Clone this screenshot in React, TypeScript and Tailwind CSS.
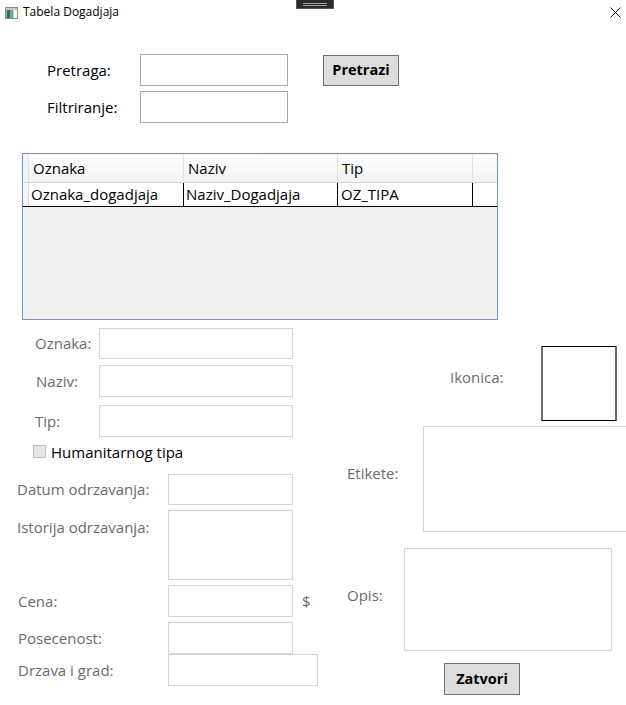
import React from "react";

const font = { fontFamily: '"Open Sans", "Noto Sans", sans-serif' };

function Input({ cls }: { cls: string }) {
  return <div className={`bg-white border border-[#d4d4d4] shrink-0 ${cls}`} />;
}

function Lbl({ children, cls = "" }: { children: React.ReactNode; cls?: string }) {
  return <div className={`text-[15px] text-[#6b6b6b] leading-none shrink-0 ${cls}`}>{children}</div>;
}

export default function App() {
  return (
    <div className="relative w-[626px] h-[705px] bg-white overflow-hidden text-black" style={font}>
      {/* title bar */}
      <div className="flex items-center h-[24px]">
        <svg width="13" height="12" viewBox="0 0 13 12" className="ml-[5px] mt-[1px]">
          <rect x="0.5" y="0.5" width="12" height="11" fill="#ffffff" stroke="#8a8a8a" />
          <rect x="1" y="1" width="11" height="2" fill="#c9c9c9" />
          <rect x="1.5" y="3" width="4" height="8" fill="#2e6e66" />
          <rect x="5.5" y="3" width="3" height="8" fill="#6aa6a0" />
        </svg>
        <span className="ml-[5px] text-[12px] leading-none">Tabela Dogadjaja</span>
        <div className="flex-1" />
        <svg width="11" height="11" viewBox="0 0 11 11" className="mr-[5px] mt-[1px]">
          <path d="M0.5 0.5 L10.5 10.5 M10.5 0.5 L0.5 10.5" stroke="#111" strokeWidth="1" />
        </svg>
      </div>
      <div className="absolute top-0 left-[296px] w-[38px] h-[9px] bg-[#2b2b2b] border border-[#555] border-t-0 flex flex-col items-center justify-center gap-[1px]">
        <div className="w-[24px] h-[1px] bg-[#a0a0a0]" />
        <div className="w-[24px] h-[1px] bg-[#a0a0a0]" />
      </div>

      {/* search */}
      <div className="mt-[30px] pl-[47px] flex flex-col gap-[5px]">
        <div className="flex items-center">
          <div className="w-[93px] text-[15px] leading-none">Pretraga:</div>
          <div className="w-[148px] h-[32px] border border-[#ababab] bg-white" />
          <button className="ml-[35px] w-[76px] h-[31px] bg-[#dddddd] border border-[#707070] font-bold text-[14.5px] leading-none flex items-center justify-center">
            Pretrazi
          </button>
        </div>
        <div className="flex items-center">
          <div className="w-[93px] text-[15px] leading-none">Filtriranje:</div>
          <div className="w-[148px] h-[32px] border border-[#ababab] bg-white" />
        </div>
      </div>

      {/* table */}
      <div className="mt-[30px] ml-[22px] w-[476px] h-[167px] border border-[#6f93cc] bg-[#f0f0f0] pt-[1px]">
        <div className="flex h-[28px] bg-gradient-to-b from-[#ffffff] to-[#f1f2f4] border-b border-[#d5d5d5] text-[15px]">
          <div className="w-[6px] border-r border-[#e2e2e2] bg-[#f4f4f4]" />
          <div className="w-[155px] border-r border-[#e2e2e2] flex items-center pl-[4px]">Oznaka</div>
          <div className="w-[154px] border-r border-[#e2e2e2] flex items-center pl-[4px]">Naziv</div>
          <div className="w-[135px] border-r border-[#e2e2e2] flex items-center pl-[4px]">Tip</div>
          <div className="flex-1" />
        </div>
        <div className="flex h-[24px] bg-white border-b border-black text-[15px]">
          <div className="w-[6px] border-r border-[#d8d8d8] bg-[#f7f7f7]" />
          <div className="w-[155px] border-r border-black flex items-center pl-[2px]">Oznaka_dogadjaja</div>
          <div className="w-[154px] border-r border-black flex items-center pl-[2px]">Naziv_Dogadjaja</div>
          <div className="w-[135px] border-r border-black flex items-center pl-[3px]">OZ_TIPA</div>
          <div className="flex-1" />
        </div>
      </div>

      {/* lower */}
      <div className="mt-[8px] flex">
        <div className="w-[320px] shrink-0 flex flex-col">
          <div className="flex items-center pl-[35px]">
            <Lbl cls="w-[64px]">Oznaka:</Lbl>
            <Input cls="w-[194px] h-[31px]" />
          </div>
          <div className="mt-[6px] flex items-center pl-[36px]">
            <Lbl cls="w-[63px]">Naziv:</Lbl>
            <Input cls="w-[194px] h-[32px]" />
          </div>
          <div className="mt-[8px] flex items-center pl-[35px]">
            <Lbl cls="w-[64px]">Tip:</Lbl>
            <Input cls="w-[194px] h-[32px]" />
          </div>
          <div className="mt-[6px] flex items-center pl-[33px] h-[17px]">
            <div className="w-[13px] h-[13px] bg-[#e6e6e6] border border-[#bcbcbc]" />
            <span className="ml-[5px] text-[15px] leading-none mt-[2px]">Humanitarnog tipa</span>
          </div>
          <div className="mt-[14px] flex items-center pl-[17px]">
            <Lbl cls="w-[151px]">Datum odrzavanja:</Lbl>
            <Input cls="w-[125px] h-[31px]" />
          </div>
          <div className="mt-[5px] flex items-start pl-[17px]">
            <Lbl cls="w-[151px] mt-[10px]">Istorija odrzavanja:</Lbl>
            <Input cls="w-[125px] h-[70px]" />
          </div>
          <div className="mt-[5px] flex items-center pl-[18px]">
            <Lbl cls="w-[150px]">Cena:</Lbl>
            <Input cls="w-[125px] h-[32px]" />
            <Lbl cls="ml-[9px]">$</Lbl>
          </div>
          <div className="mt-[5px] flex items-center pl-[18px]">
            <Lbl cls="w-[150px]">Posecenost:</Lbl>
            <Input cls="w-[125px] h-[32px]" />
          </div>
          <div className="flex items-center pl-[18px]">
            <Lbl cls="w-[150px]">Drzava i grad:</Lbl>
            <Input cls="w-[150px] h-[32px]" />
          </div>
        </div>

        <div className="flex-1 flex flex-col">
          <div className="mt-[18px] flex items-center pl-[130px]">
            <Lbl cls="w-[91px] -mt-[12px]">Ikonica:</Lbl>
            <div className="w-[76px] h-[75px] shrink-0 bg-white border-y border-x-2 border-y-black border-x-[#6e6e6e]" />
          </div>
          <div className="mt-[5px] flex items-center pl-[27px]">
            <Lbl cls="w-[76px] -mt-[12px]">Etikete:</Lbl>
            <Input cls="w-[210px] h-[106px]" />
          </div>
          <div className="mt-[16px] flex items-center pl-[27px]">
            <Lbl cls="w-[57px] -mt-[8px]">Opis:</Lbl>
            <Input cls="w-[208px] h-[103px]" />
          </div>
          <button className="mt-[12px] ml-[124px] w-[76px] h-[32px] bg-[#dddddd] border border-[#707070] font-bold text-[14.5px] leading-none flex items-center justify-center">
            Zatvori
          </button>
        </div>
      </div>
    </div>
  );
}
